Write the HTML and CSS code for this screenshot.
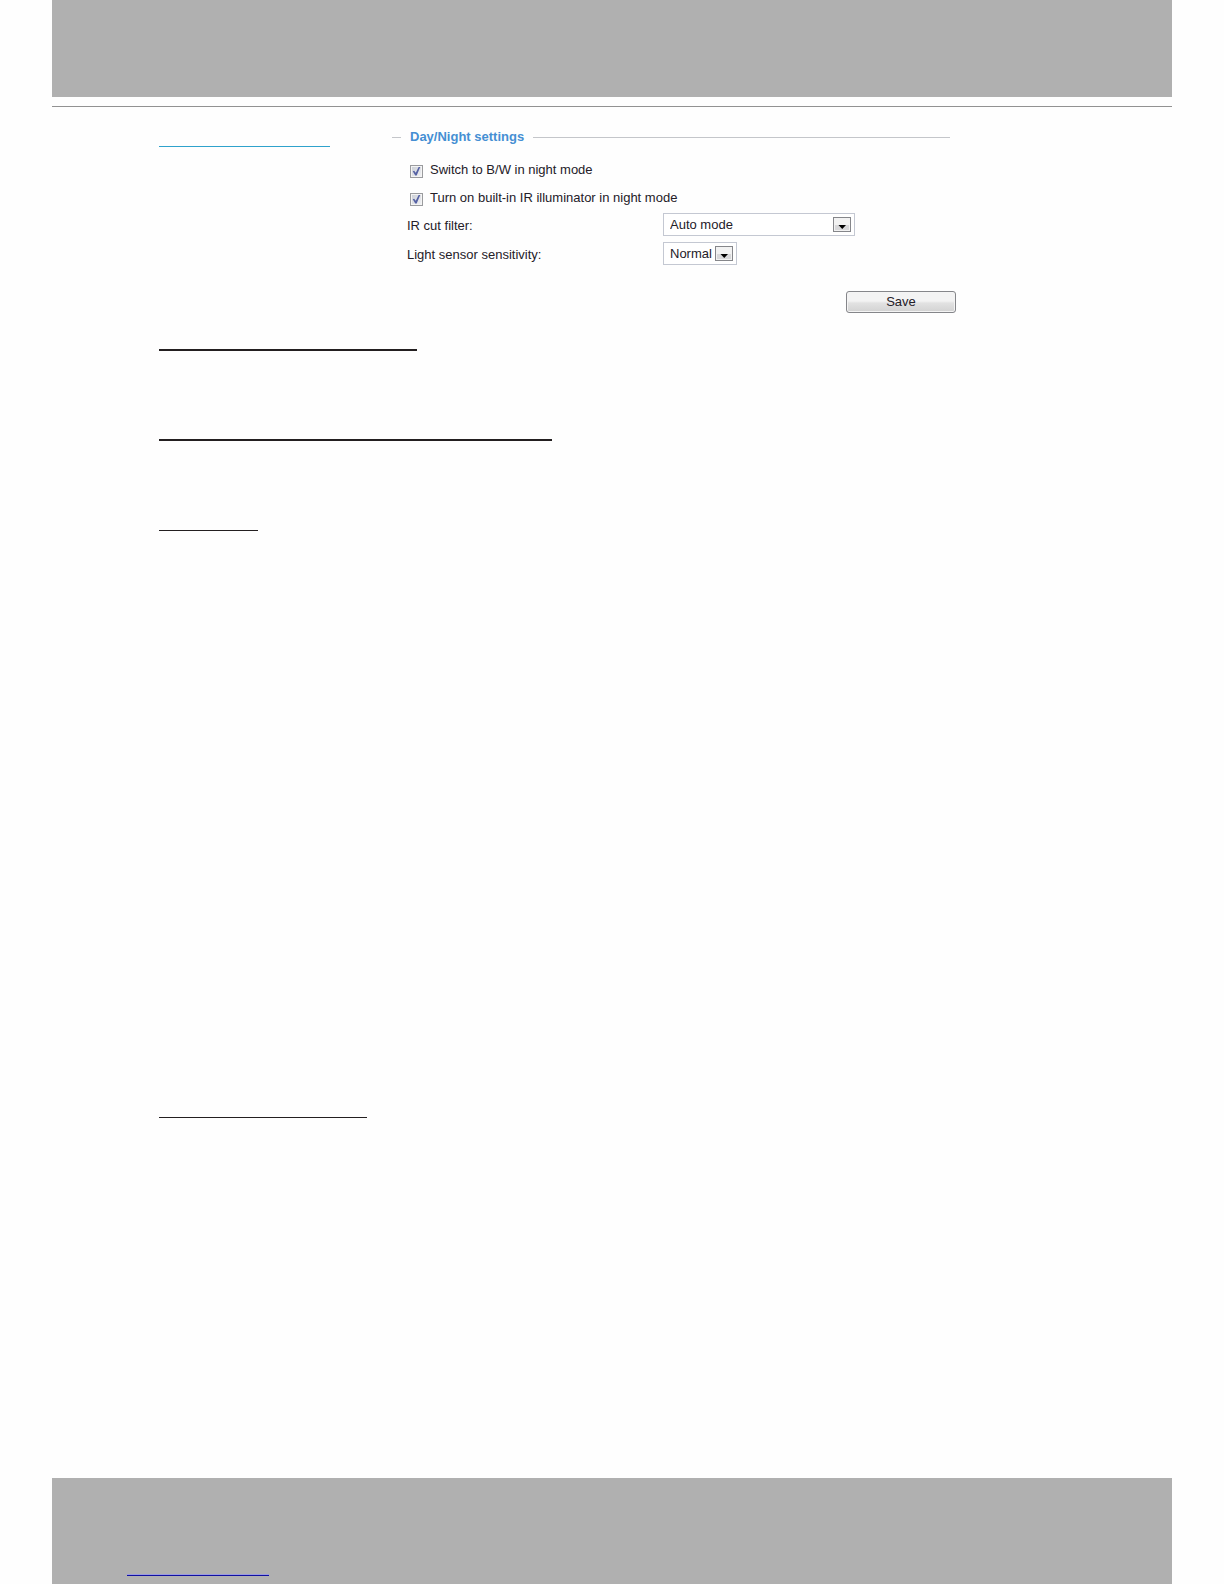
FILE: index.html
```html
<!DOCTYPE html>
<html lang="en">
<head>
<meta charset="utf-8">
<title>Day/Night settings</title>
<link rel="stylesheet" href="styles.css">
</head>
<body>
<div class="page">
  <header class="band band-top"></header>
  <hr class="divider">
  <main class="content">
    <div class="intro">
      <div class="rule rule-accent"></div>
      <form class="panel">
        <h2 class="legend">Day/Night settings</h2>
        <label class="check"><input type="checkbox" checked><span>Switch to B/W in night mode</span></label>
        <label class="check"><input type="checkbox" checked><span>Turn on built-in IR illuminator in night mode</span></label>
        <div class="field">
          <label for="filter">IR cut filter:</label>
          <div class="picker picker-wide">
            <select id="filter"><option>Auto mode</option></select>
            <svg class="arrow" viewBox="0 0 18 15" aria-hidden="true"><rect class="arrow-box" x=".5" y=".5" width="17" height="14"/><path class="arrow-shade" d="M2 8h14v5H2z"/><path d="M5.500 8h7.500L9.250 12z"/></svg>
          </div>
        </div>
        <div class="field">
          <label for="sensitivity">Light sensor sensitivity:</label>
          <div class="picker">
            <select id="sensitivity"><option>Normal</option></select>
            <svg class="arrow" viewBox="0 0 18 15" aria-hidden="true"><rect class="arrow-box" x=".5" y=".5" width="17" height="14"/><path class="arrow-shade" d="M2 8h14v5H2z"/><path d="M5.500 8h7.500L9.250 12z"/></svg>
          </div>
        </div>
        <button class="save" type="button">Save</button>
      </form>
    </div>
    <section class="topic"><div class="rule rule-bold rule-switch"></div></section>
    <section class="topic"><div class="rule rule-bold rule-infrared"></div></section>
    <section class="topic topic-long"><div class="rule rule-filter"></div></section>
    <section class="topic"><div class="rule rule-sensor"></div></section>
  </main>
  <footer class="band band-bottom"><div class="rule-link"></div></footer>
</div>
</body>
</html>
```
FILE: styles.css
```css
* { box-sizing: border-box; }
body {
  margin: 0;
  background: #fefefe;
  color: #242028;
  font: 13px/16px "Liberation Sans", Arial, sans-serif;
}
.page {
  display: flex;
  flex-direction: column;
  min-height: 100vh;
  padding: 0 52px;
}
.band { background: #b0b0b0; }
.band-top { height: 97px; }
.band-bottom { height: 106px; margin-top: auto; padding: 96px 75px 0; }
.divider { width: 100%; margin: 9px 0 0; border: 0; border-top: 1px solid #929292; }
.content { padding-left: 107px; }
.intro { display: flex; gap: 62px; padding-bottom: 36px; }

.rule { height: 1px; background: #231f20; }
.rule-bold { height: 2px; }
.rule-accent { width: 171px; margin-top: 39px; background: #2fa2cc; }
.rule-switch { width: 258px; }
.rule-infrared { width: 393px; }
.rule-filter { width: 99px; }
.rule-sensor { width: 208px; }
.rule-link { width: 142px; height: 2px; background: #9a9ae0; border-bottom: 1px solid #1010a0; }
.topic { min-height: 90px; }
.topic-long { min-height: 588px; padding-top: 1px; }

.panel { display: flex; flex-direction: column; width: 564px; margin-top: 22px; }
.legend {
  display: flex;
  align-items: center;
  gap: 9px;
  margin: 0 6px 12px 0;
  color: #458fd3;
  font-size: 13px;
  line-height: 16px;
}
.legend::before, .legend::after { content: ""; height: 1px; background: #c4c6ca; }
.legend::before { width: 9px; }
.legend::after { flex: 1; }

.check { display: flex; align-items: center; gap: 7px; height: 28px; padding-left: 18px; }
.check span { padding-bottom: 2px; }
.check input {
  appearance: none;
  width: 13px;
  height: 13px;
  margin: 0;
  border: 1px solid #9a9b9e;
  background: linear-gradient(135deg, #c9cdd5, #f3f3f5);
  box-shadow: inset 0 0 0 1px #f4f4f4;
  display: grid;
  place-items: center;
}
.check input:checked::before {
  content: "";
  width: 9px;
  height: 9px;
  background: #5662a4;
  clip-path: polygon(8% 52%, 24% 46%, 42% 70%, 76% 0, 94% 0, 52% 100%, 36% 100%);
}

.field { display: flex; margin-bottom: 6px; padding-left: 15px; }
.field label { width: 256px; padding-top: 5px; }
.picker { display: grid; align-items: center; width: 74px; height: 23px; }
.picker-wide { width: 192px; }
.picker select {
  grid-area: 1 / 1;
  appearance: none;
  width: 100%;
  height: 100%;
  padding: 0 22px 0 6px;
  border: 1px solid #c4c8d2;
  border-radius: 0;
  background: #fff;
  color: inherit;
  font: inherit;
}
.arrow {
  grid-area: 1 / 1;
  justify-self: end;
  z-index: 1;
  width: 18px;
  height: 15px;
  margin-right: 4px;
  pointer-events: none;
}
.arrow-box { fill: #f2f2f2; stroke: #85868a; }
.arrow-shade { fill: #d8d8da; }
.save {
  align-self: flex-end;
  width: 110px;
  height: 22px;
  margin-top: 20px;
  padding: 0;
  border: 1px solid #85868a;
  border-radius: 3px;
  background: linear-gradient(#f3f3f3 0 45%, #e2e2e2 55%, #d2d2d2);
  box-shadow: inset 0 0 0 1px #f4f4f4;
  color: inherit;
  font: inherit;
}
```
